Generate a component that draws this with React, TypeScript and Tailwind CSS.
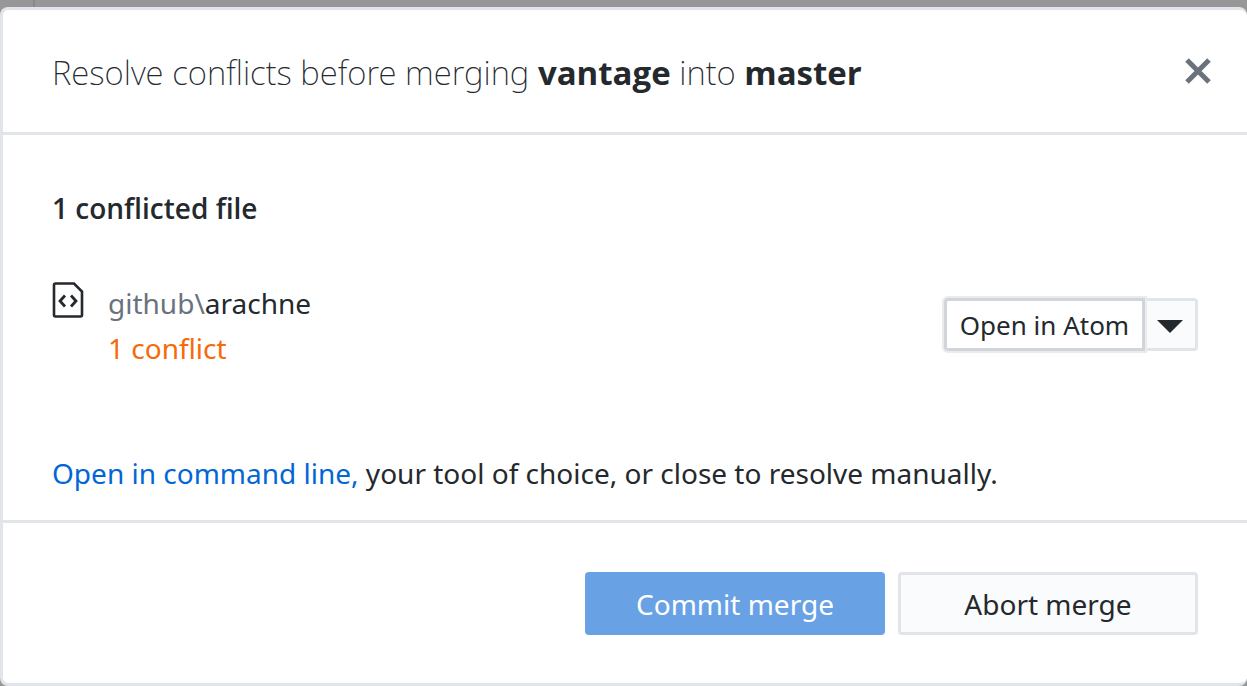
import { ReactNode } from "react";

function FileCodeIcon() {
  return (
    <svg width="32" height="36" viewBox="0 0 32 36" fill="none" stroke="#24292e" aria-hidden="true">
      <path d="M3.5 1.5H22L30 9.5V33Q30 34.5 28.5 34.500H3.5Q2 34.5 2 33V3Q2 1.5 3.5 1.5Z" strokeWidth="2.6" />
      <path d="M13 13.5L8 19L13 24.5M19 13.5L24 19L19 24.5" strokeWidth="2.8" />
    </svg>
  );
}

function CloseIcon() {
  return (
    <svg width="28" height="28" viewBox="0 0 28 28" stroke="#6a737d" strokeWidth="5" aria-hidden="true">
      <path d="M3 3L25 25M25 3L3 25" />
    </svg>
  );
}

function FooterButton({ primary, children }: { primary?: boolean; children: ReactNode }) {
  return (
    <button
      type="button"
      disabled={primary}
      className={
        primary
          ? "h-[63px] w-[300px] rounded bg-[#68a2e5] text-[28px] leading-9 text-white"
          : "h-[63px] w-[300px] rounded border-3 border-[#e1e4e8] bg-[#fafbfc] text-[28px] leading-9 text-[#24292e]"
      }
    >
      {children}
    </button>
  );
}

export default function App() {
  return (
    <div className="flex min-h-screen flex-col bg-[#979797] font-['Noto_Sans','Open_Sans',sans-serif] text-[28px] leading-[45px] text-[#24292e]">
      <div className="flex h-[7px] shrink-0">
        <div className="w-[35px] border-r-2 border-[#888888]" />
      </div>
      <section
        role="dialog"
        aria-labelledby="dialog-title"
        className="flex grow flex-col rounded-lg border-3 border-r-0 border-[#e1e4e8] bg-white"
      >
        <header className="flex h-[125px] items-center justify-between border-b-3 border-[#e1e4e8] pr-[35px] pl-[49px]">
          <h1 id="dialog-title" className="pt-0.5 text-[33px] leading-[51px] font-extralight">
            Resolve conflicts before merging{" "}
            <strong className="font-['Open_Sans','Noto_Sans',sans-serif] font-bold">vantage</strong> into{" "}
            <strong className="font-['Open_Sans','Noto_Sans',sans-serif] font-bold">master</strong>
          </h1>
          <button type="button" aria-label="Close">
            <CloseIcon />
          </button>
        </header>

        <main className="flex h-[388px] flex-col border-b-3 border-[#e1e4e8] px-[49px] pt-[51px]">
          <h2 className="font-['Open_Sans','Noto_Sans',sans-serif] font-semibold">1 conflicted file</h2>
          <div className="mt-[50px] flex items-start">
            <div className="pt-px">
              <FileCodeIcon />
            </div>
            <div className="grow pl-6">
              <p>
                <span className="text-[#6a737d]">github\</span>arachne
              </p>
              <p className="text-[#f66a0a]">1 conflict</p>
            </div>
            <div className="mt-[17px] flex">
              <button
                type="button"
                className="relative h-[53px] w-[201px] rounded-l border-3 border-[#d1d5da] bg-white text-[26px] leading-9 shadow-[0_0_0_2px_#e9ebee]"
              >
                Open in Atom
              </button>
              <button
                type="button"
                aria-label="Choose editor"
                className="flex h-[53px] w-[53px] items-center justify-center rounded-r border-3 border-l-0 border-[#e1e4e8] bg-[#fafbfc] pt-1"
              >
                <svg width="26" height="13" viewBox="0 0 26 13" fill="#24292e" aria-hidden="true">
                  <path d="M0 0H26L13 13Z" />
                </svg>
              </button>
            </div>
          </div>
          <p className="mt-20">
            <a href="#command-line" className="text-[#0366d6]">
              Open in command line,
            </a>{" "}
            your tool of choice, or close to resolve manually.
          </p>
        </main>

        <footer className="flex justify-end gap-[13px] px-[49px] pt-[49px] pb-12">
          <FooterButton primary>Commit merge</FooterButton>
          <FooterButton>Abort merge</FooterButton>
        </footer>
      </section>
    </div>
  );
}
